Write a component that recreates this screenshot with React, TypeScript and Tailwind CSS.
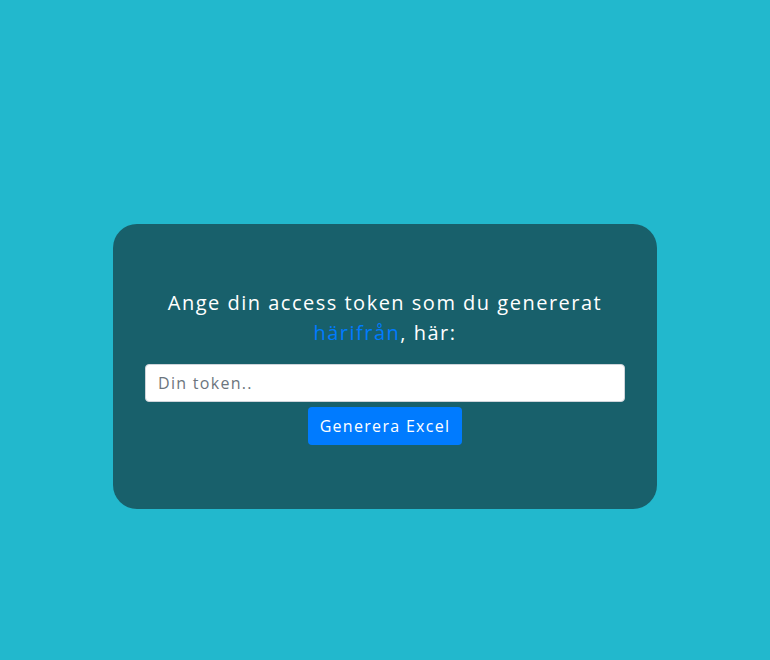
import React from 'react';

export default function App() {
  return (
    <div className="min-h-[660px] w-full bg-[#22b8cd] pt-[224px] font-['Open_Sans',sans-serif] tracking-[1.3px]">
      <div className="mx-auto w-[544px] h-[285px] rounded-[24px] bg-[#18606b] px-8 pt-[64px] flex flex-col items-center">
        <p className="text-white text-[20px] leading-[30px] text-center tracking-[1.5px]">
          Ange din access token som du genererat<br />
          <a href="#" className="text-[#007bff]">härifrån</a>, här:
        </p>
        <input
          type="text"
          placeholder="Din token.."
          className="mt-[16px] w-full h-[38px] rounded bg-white border border-[#ced4da] px-3 text-base tracking-[1.3px] text-[#495057] placeholder:text-[#6c757d] outline-none"
        />
        <button className="mt-[5px] h-[38px] px-3 rounded bg-[#007bff] text-white text-base tracking-[1.3px]">
          Generera Excel
        </button>
      </div>
    </div>
  );
}
